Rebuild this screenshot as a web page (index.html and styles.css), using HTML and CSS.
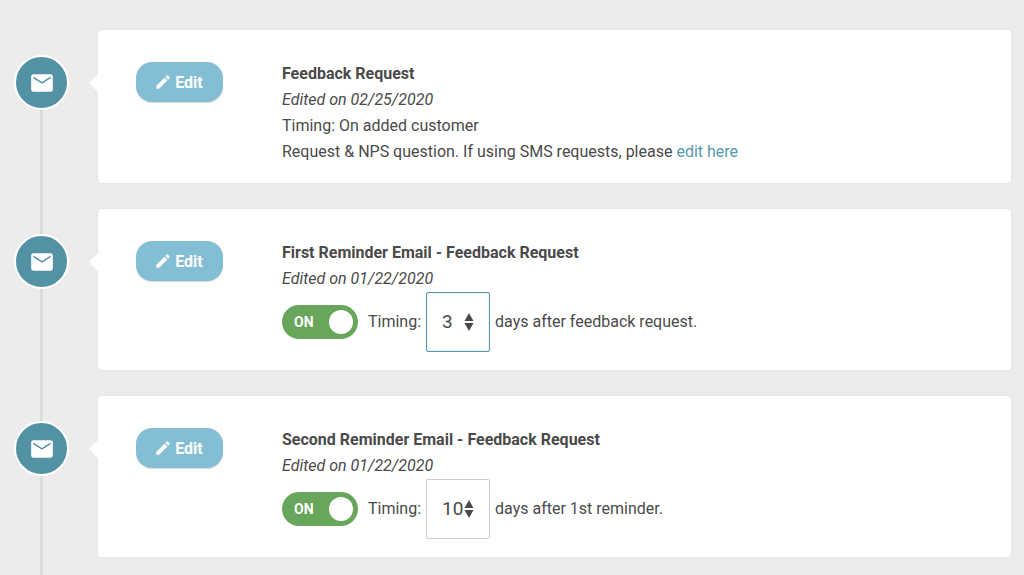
FILE: index.html
```html
<!DOCTYPE html>
<html lang="en">
<head>
 <meta charset="utf-8">
 <meta name="viewport" content="width=device-width, initial-scale=1">
 <title>Email requests</title>
 <link rel="stylesheet" href="styles.css">
</head>
<body>
 <svg class="symbols" aria-hidden="true">
  <symbol id="mail" viewBox="0 0 24 24">
   <path d="M20 4H4c-1.100 0-1.990.9-1.990 2L2 18c0 1.100.9 2 2 2h16c1.100 0 2-.9 2-2V6c0-1.100-.9-2-2-2zm0 3.600l-8 5-8-5V6l8 5 8-5v1.600z"/>
  </symbol>
  <symbol id="pencil" viewBox="0 0 24 24">
   <path d="M3 17.250V21h3.750L17.810 9.940l-3.750-3.750L3 17.250zM20.710 7.040c.39-.39.39-1.020 0-1.410l-2.340-2.340c-.39-.39-1.020-.39-1.410 0l-1.830 1.830 3.750 3.750 1.830-1.830z"/>
  </symbol>
  <symbol id="updown" viewBox="0 0 10 18">
   <path d="M5 0l4.500 8h-9zM5 18l4.500-8h-9z"/>
  </symbol>
 </svg>
 <main class="timeline">
  <section class="step">
   <div class="marker">
    <span class="circle"><svg class="mail"><use href="#mail"/></svg></span>
   </div>
   <div class="card">
    <div class="action">
     <button type="button" class="edit"><svg class="pencil"><use href="#pencil"/></svg>Edit</button>
    </div>
    <div class="info">
     <h2>Feedback Request</h2>
     <p class="edited">Edited on 02/25/2020</p>
     <p>Timing: On added customer</p>
     <p>Request &amp; NPS question. If using SMS requests, please <a href="#">edit here</a></p>
    </div>
   </div>
  </section>
  <section class="step">
   <div class="marker">
    <span class="circle"><svg class="mail"><use href="#mail"/></svg></span>
   </div>
   <div class="card">
    <div class="action">
     <button type="button" class="edit"><svg class="pencil"><use href="#pencil"/></svg>Edit</button>
    </div>
    <div class="info">
     <h2>First Reminder Email - Feedback Request</h2>
     <p class="edited">Edited on 01/22/2020</p>
     <div class="timing">
      <label class="switch"><input type="checkbox" checked><span>ON</span></label>
      <label for="days1">Timing:</label>
      <div class="days active">
       <input type="number" id="days1" value="3" min="1">
       <svg class="updown"><use href="#updown"/></svg>
      </div>
      <span>days after feedback request.</span>
     </div>
    </div>
   </div>
  </section>
  <section class="step">
   <div class="marker">
    <span class="circle"><svg class="mail"><use href="#mail"/></svg></span>
   </div>
   <div class="card">
    <div class="action">
     <button type="button" class="edit"><svg class="pencil"><use href="#pencil"/></svg>Edit</button>
    </div>
    <div class="info">
     <h2>Second Reminder Email - Feedback Request</h2>
     <p class="edited">Edited on 01/22/2020</p>
     <div class="timing">
      <label class="switch"><input type="checkbox" checked><span>ON</span></label>
      <label for="days2">Timing:</label>
      <div class="days">
       <input type="number" id="days2" value="10" min="1">
       <svg class="updown"><use href="#updown"/></svg>
      </div>
      <span>days after 1st reminder.</span>
     </div>
    </div>
   </div>
  </section>
 </main>
</body>
</html>
```
FILE: styles.css
```css
* {
 box-sizing: border-box;
}
body {
 margin: 0;
 background-color: #ececec;
 color: #4a4a4a;
 font-family: Roboto, sans-serif;
 font-size: 16px;
 line-height: 26px;
}
h2, p {
 margin: 0;
 font-size: 16px;
}
a {
 color: #5499b0;
 text-decoration: none;
}
.symbols {
 display: none;
}
.edited {
 font-style: italic;
}
/* Timeline */
.timeline {
 padding: 30px 13px 0 14px;
}
.step {
 display: flex;
 gap: 29px;
}
.marker {
 flex: none;
 width: 55px;
 padding-top: 25px;
 background: linear-gradient(#d9dddc, #d9dddc) center / 3px 100% no-repeat;
}
.step:first-child .marker {
 background-position: center 60px;
}
.circle {
 display: flex;
 align-items: center;
 justify-content: center;
 height: 55px;
 border: 2px solid #fff;
 border-radius: 50%;
 background-color: #5392a5;
}
.mail {
 width: 26px;
 height: 26px;
 fill: #fff;
}
/* Cards */
.card {
 position: relative;
 flex: 1;
 display: flex;
 margin-bottom: 26px;
 padding: 31px 38px 18px;
 border-radius: 4px;
 background-color: #fff;
 box-shadow: 0 0 4px rgba(0, 0, 0, 0.04);
}
.card::before {
 content: "";
 position: absolute;
 top: 44px;
 left: -9px;
 border: 9px solid transparent;
 border-left: 0;
 border-right-color: #fff;
}
.action {
 flex: none;
 width: 146px;
 padding-top: 1px;
}
.edit {
 display: flex;
 align-items: center;
 justify-content: center;
 gap: 3px;
 width: 87px;
 height: 40px;
 padding: 0 2px 0 0;
 border: 0;
 border-radius: 16px;
 background-color: #84bed5;
 box-shadow: 0 1px 1px rgba(0, 0, 0, 0.15);
 color: #fff;
 font-family: inherit;
 font-size: 16px;
 font-weight: bold;
 cursor: pointer;
}
.pencil {
 width: 18px;
 height: 18px;
 fill: #fff;
}
/* Timing row */
.timing {
 display: flex;
 align-items: center;
 gap: 5px;
}
.switch {
 position: relative;
 width: 76px;
 height: 34px;
 margin-right: 5px;
 cursor: pointer;
}
.switch input {
 appearance: none;
 display: flex;
 align-items: center;
 justify-content: flex-end;
 width: 100%;
 height: 100%;
 margin: 0;
 padding: 0 5px;
 border-radius: 17px;
 background-color: #68a65b;
}
.switch input::before {
 content: "";
 width: 24px;
 height: 24px;
 border-radius: 50%;
 background-color: #fff;
}
.switch span {
 position: absolute;
 top: 4px;
 left: 12px;
 color: #fff;
 font-size: 14px;
 font-weight: bold;
}
.days {
 position: relative;
}
.days input {
 appearance: textfield;
 display: block;
 width: 64px;
 height: 60px;
 padding: 0 14px 2px 15px;
 border: 1px solid #ccc;
 border-radius: 2px;
 background-color: #fff;
 color: #4a4a4a;
 font-family: inherit;
 font-size: 19px;
}
.days.active input {
 border-color: #5499b0;
 box-shadow: inset 0 0 1px #5499b0;
}
.days input::-webkit-inner-spin-button {
 display: none;
}
.updown {
 position: absolute;
 top: 21px;
 right: 16px;
 width: 10px;
 height: 18px;
 fill: #4a4a4a;
 pointer-events: none;
}
```
